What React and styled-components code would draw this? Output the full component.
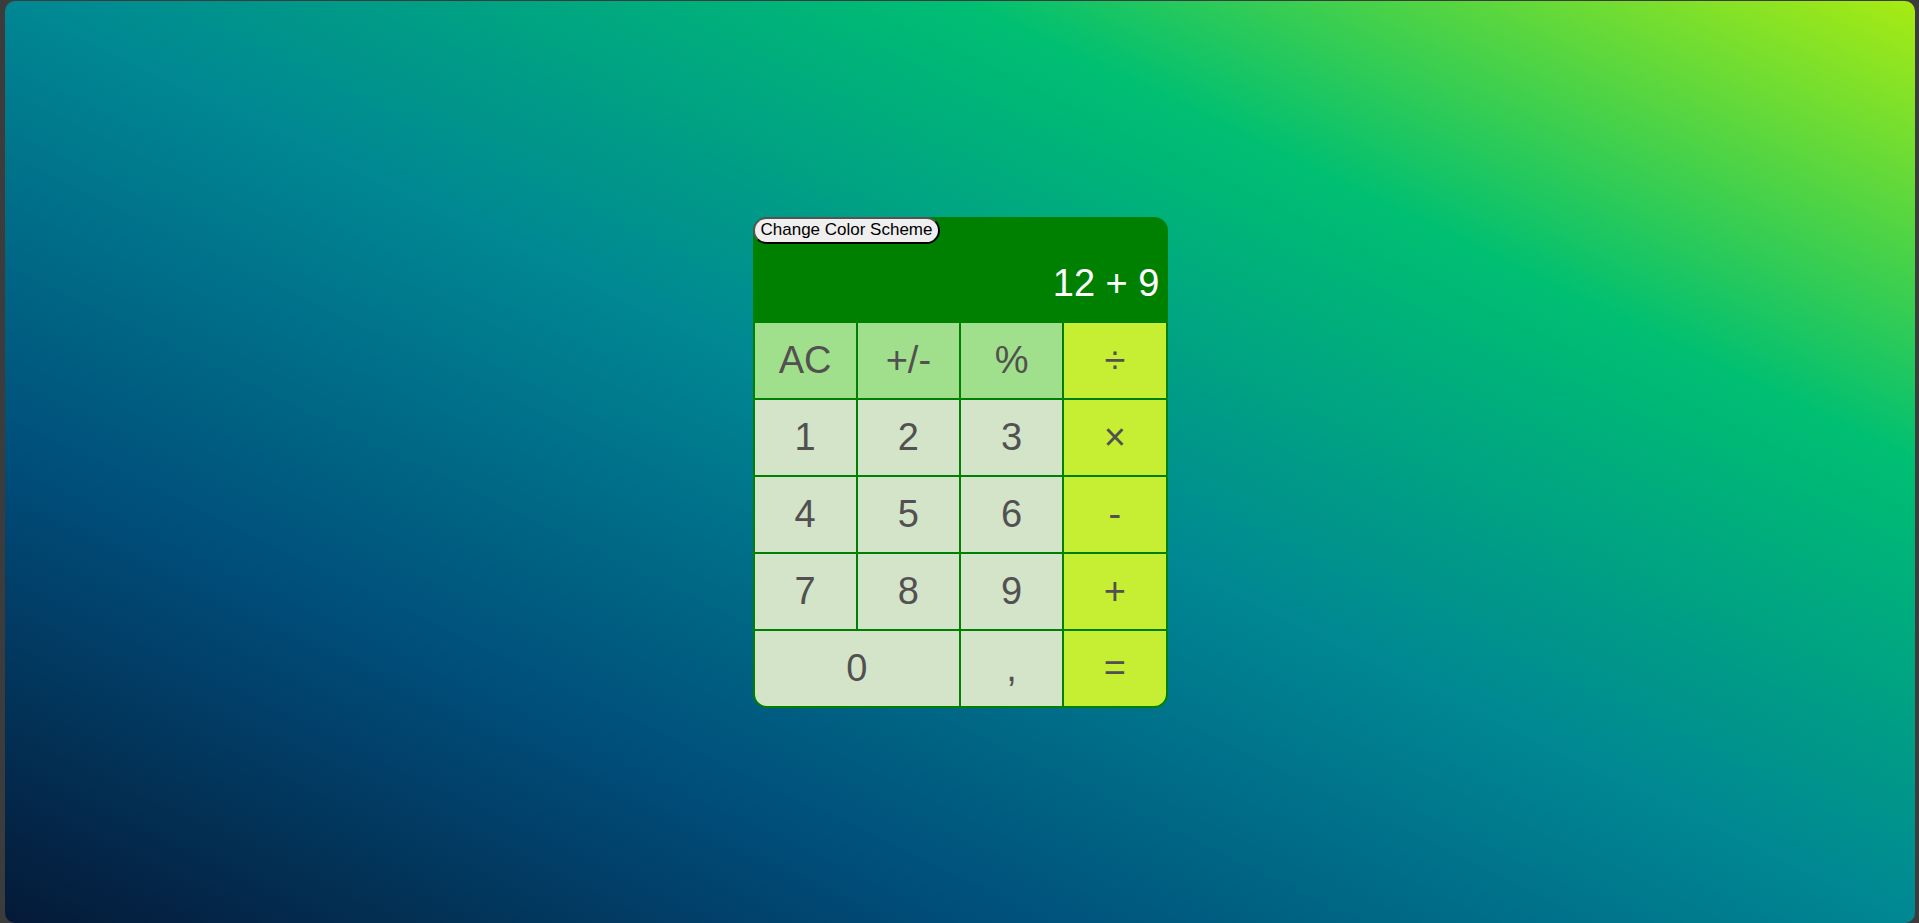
import React, { useState } from "react";
import styled, { createGlobalStyle, css } from "styled-components";

const GlobalStyle = createGlobalStyle`
  *, *::before, *::after { box-sizing: border-box; }
  body {
    margin: 0;
    background: #3c3c3c;
    font-family: Arial, "Liberation Sans", sans-serif;
  }
`;

const Page = styled.main`
  display: flex;
  min-height: 100vh;
  padding: 1px 4px 0 5px;
`;

const Backdrop = styled.div`
  flex: 1;
  display: flex;
  align-items: center;
  justify-content: center;
  border-radius: 10px;
  background: linear-gradient(to right top, #051937, #004d7a, #008793, #00bf72, #a8eb12);
`;

const Calculator = styled.section`
  width: 415px;
  border-radius: 14px;
  background: ${(p) => p.$frame};
  overflow: hidden;
`;

const Header = styled.header`
  display: flex;
  flex-direction: column;
  justify-content: space-between;
  align-items: flex-start;
  height: 104px;
  padding-bottom: 16px;
`;

const SchemeButton = styled.button`
  height: 27px;
  padding: 0 6px;
  border: 2px outset #000;
  border-radius: 14px;
  background: #efefef;
  color: #000;
  font-family: inherit;
  font-size: 17px;
  line-height: 20px;
  white-space: nowrap;
`;

const Display = styled.output`
  align-self: stretch;
  padding-right: 8px;
  color: #fff;
  font-size: 38px;
  line-height: 44px;
  text-align: right;
`;

const Keypad = styled.div`
  display: grid;
  grid-template-columns: repeat(4, 1fr);
  grid-auto-rows: 75px;
  gap: 2px;
  padding: 2px;
`;

const keyColors = {
  digit: "#d3e4c9",
  action: "#a0df8b",
  operator: "#c6ee33",
};

const Key = styled.button`
  padding: 0;
  border: 0;
  background: ${(p) => keyColors[p.$kind]};
  color: #525050;
  font-family: inherit;
  font-size: 38px;
  line-height: 44px;
  ${(p) => p.$wide && css`grid-column: span 2;`}
  ${(p) => p.$corner === "left" && css`border-bottom-left-radius: 12px;`}
  ${(p) => p.$corner === "right" && css`border-bottom-right-radius: 12px;`}
`;

const keys = [
  { label: "AC", kind: "action" },
  { label: "+/-", kind: "action" },
  { label: "%", kind: "action" },
  { label: "÷", kind: "operator" },
  { label: "1", kind: "digit" },
  { label: "2", kind: "digit" },
  { label: "3", kind: "digit" },
  { label: "×", kind: "operator" },
  { label: "4", kind: "digit" },
  { label: "5", kind: "digit" },
  { label: "6", kind: "digit" },
  { label: "-", kind: "operator" },
  { label: "7", kind: "digit" },
  { label: "8", kind: "digit" },
  { label: "9", kind: "digit" },
  { label: "+", kind: "operator" },
  { label: "0", kind: "digit", wide: true, corner: "left" },
  { label: ",", kind: "digit" },
  { label: "=", kind: "operator", corner: "right" },
];

const frames = ["#008000", "#004d7a"];

export default function App() {
  const [scheme, setScheme] = useState(0);

  return (
    <>
      <GlobalStyle />
      <Page>
        <Backdrop>
          <Calculator $frame={frames[scheme]}>
            <Header>
              <SchemeButton type="button" onClick={() => setScheme(1 - scheme)}>
                Change Color Scheme
              </SchemeButton>
              <Display>12 + 9</Display>
            </Header>
            <Keypad>
              {keys.map((key) => (
                <Key
                  key={key.label}
                  type="button"
                  $kind={key.kind}
                  $wide={key.wide}
                  $corner={key.corner}
                >
                  {key.label}
                </Key>
              ))}
            </Keypad>
          </Calculator>
        </Backdrop>
      </Page>
    </>
  );
}
